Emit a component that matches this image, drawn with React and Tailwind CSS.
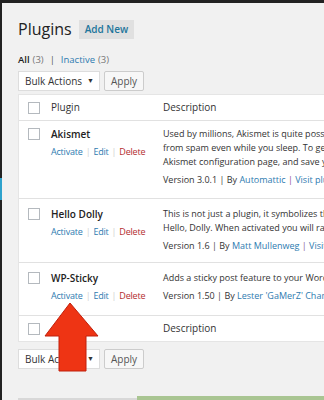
import React from "react";

const font = { fontFamily: "'Open Sans', 'Noto Sans', sans-serif" };

const Box = ({ className = "" }) => (
  <span className={`block w-[12px] h-[12px] border border-[#b4b9be] bg-white ${className}`} />
);

const Actions = () => (
  <div className="flex items-center text-[9px] tracking-[-0.2px] leading-[15px] mt-[2px] whitespace-nowrap">
    <span className="text-[#2e7bb0]">Activate</span>
    <span className="mx-[3px] text-[#d0d0d0]">|</span>
    <span className="text-[#2e7bb0]">Edit</span>
    <span className="mx-[3px] text-[#d0d0d0]">|</span>
    <span className="text-[#b32d2e]">Delete</span>
  </div>
);

const plugins = [
  {
    name: "Akismet",
    h: "h-[78px]",
    pt: "pt-[6px]",
    desc: [
      "Used by millions, Akismet is quite possibly the best way in the world to protect your blog",
      "from spam even while you sleep. To get started: 1) Click the \"Activate\" link, 2) Go to your",
      "Akismet configuration page, and save your API key.",
    ],
    version: "3.0.1",
    author: "Automattic",
  },
  {
    name: "Hello Dolly",
    h: "h-[64px]",
    pt: "pt-[8px]",
    desc: [
      "This is not just a plugin, it symbolizes the hope and enthusiasm of an entire generation",
      "Hello, Dolly. When activated you will randomly see a lyric from Hello, Dolly in the upper right",
    ],
    version: "1.6",
    author: "Matt Mullenweg",
  },
  {
    name: "WP-Sticky",
    h: "h-[53px]",
    pt: "pt-[8px]",
    desc: ["Adds a sticky post feature to your WordPress blog."],
    version: "1.50",
    author: "Lester 'GaMerZ' Chan",
  },
];

const BulkBar = () => (
  <div className="flex items-center gap-[4px]">
    <div className="w-[82px] h-[20px] bg-white border border-[#dddddd] flex items-center justify-between pl-[6px] pr-[5px] text-[10px] text-[#333]">
      <span>Bulk Actions</span>
      <span className="text-[7px]">▼</span>
    </div>
    <div className="w-[40px] h-[20px] bg-[#f7f7f7] border border-[#cccccc] rounded-[2px] flex items-center justify-center text-[10px] text-[#555]">
      Apply
    </div>
  </div>
);

export default function App() {
  return (
    <div className="w-[324px] h-[400px] overflow-hidden bg-[#222] relative" style={font}>
      <div className="absolute left-0 top-[178px] w-[2px] h-[22px] bg-[#2ea2cc]" />
      <div className="ml-[2px] mt-[3px] h-[397px] bg-[#f1f1f1] pl-[16px] flex flex-col">
        <div className="flex items-center mt-[16px] h-[20px]">
          <span className="text-[16px] leading-[20px] text-[#222]">Plugins</span>
          <span className="ml-[7px] h-[19px] px-[6px] flex items-center bg-[#e0e0e0] text-[#21759b] text-[10px] font-semibold">
            Add New
          </span>
        </div>
        <div className="mt-[14px] text-[9.5px] leading-[14px] flex items-center">
          <span className="font-semibold text-[#222]">All</span>
          <span className="ml-[3px] text-[#777]">(3)</span>
          <span className="mx-[6px] text-[#555]">|</span>
          <span className="text-[#2e7bb0]">Inactive</span>
          <span className="ml-[3px] text-[#777]">(3)</span>
        </div>
        <div className="mt-[4px]">
          <BulkBar />
        </div>
        <div className="mt-[3px] w-[460px] bg-white border border-[#e5e5e5] text-[#333]">
          <div className="h-[26px] flex items-center border-b border-[#e1e1e1]">
            <div className="w-[28px] shrink-0 pl-[9px]"><Box /></div>
            <div className="w-[116px] shrink-0 pl-[4px] text-[10px]">Plugin</div>
            <div className="text-[10px]">Description</div>
          </div>
          {plugins.map((p) => (
            <div key={p.name} className={`${p.h} ${p.pt} flex border-b border-[#e1e1e1]`}>
              <div className="w-[28px] shrink-0 pl-[9px] pt-[1px]"><Box /></div>
              <div className="w-[116px] shrink-0 pl-[4px]">
                <div className="text-[10px] leading-[15px] font-semibold text-[#222]">{p.name}</div>
                <Actions />
              </div>
              <div className="text-[9px] leading-[14px] whitespace-nowrap">
                {p.desc.map((l) => (
                  <div key={l}>{l}</div>
                ))}
                <div className="mt-[4px]">
                  Version {p.version} <span className="text-[#444]">|</span> By{" "}
                  <span className="text-[#2e7bb0]">{p.author}</span>{" "}
                  <span className="text-[#8a4f93]">|</span>{" "}
                  <span className="text-[#2e7bb0]">Visit plugin site</span>
                </div>
              </div>
            </div>
          ))}
          <div className="h-[25px] flex items-center">
            <div className="w-[28px] shrink-0 pl-[9px]"><Box /></div>
            <div className="w-[116px] shrink-0" />
            <div className="text-[10px]">Description</div>
          </div>
        </div>
        <div className="mt-[7px]">
          <BulkBar />
        </div>
        <div className="mt-auto flex items-end h-[4px] -ml-[16px]">
          <div className="w-[119px] h-[2px] ml-[16px] bg-[#d8d8d8]" />
          <div className="flex-1 h-[4px] bg-[#a9c592]" />
        </div>
      </div>
      <svg className="absolute left-0 top-0" width="324" height="400" viewBox="0 0 324 400">
        <polygon
          points="70,303 98,336 86,336 86,371 59,371 59,336 45,336"
          fill="#ee3414"
          stroke="#c1200c"
          strokeWidth="1"
          strokeLinejoin="round"
        />
      </svg>
    </div>
  );
}
